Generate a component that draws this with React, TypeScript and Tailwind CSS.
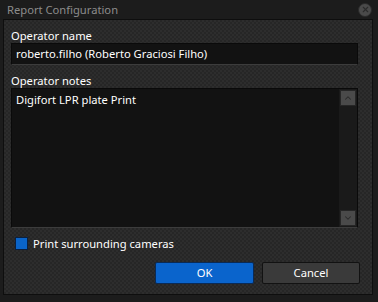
import { ChevronUp, ChevronDown, X } from "lucide-react";

const FONT = "font-['Segoe_UI','Noto_Sans',sans-serif]";

export default function App() {
  return (
    <div className={`w-[378px] h-[302px] bg-[#1c1c1c] flex flex-col ${FONT} text-[11.2px]`}>
      {/* Title bar */}
      <div className="h-[19px] flex items-center justify-between pl-[7px] pr-[6px]">
        <span className="text-[#8c8c8c] text-[11.2px] leading-none">Report Configuration</span>
        <div className="w-[14px] h-[14px] rounded-full bg-[#4a4a4a] border border-[#2a2a2a] flex items-center justify-center">
          <X size={9} strokeWidth={3} className="text-[#2c2c2c]" />
        </div>
      </div>

      {/* Body */}
      <div className="flex-1 flex pl-[3px] pr-[5px] pb-[7px]">
        <div className="flex-1 border border-[#0e0e0e] bg-[#2a2a2a] bg-[repeating-conic-gradient(#2d2d2d_0_25%,#262626_0_50%)] bg-[length:4px_4px] flex flex-col pl-[7px] pr-[14px] pt-[9px]">
          <label className="text-white leading-[14px]">Operator name</label>
          <div className="h-[22px] bg-[#121212] border border-[#0a0a0a] border-b-[#3c3c3c] flex items-center px-[4px] text-white">
            roberto.filho (Roberto Graciosi Filho)
          </div>

          <label className="text-white leading-[14px] mt-[9px]">Operator notes</label>
          <div className="h-[140px] bg-[#121212] border border-[#0a0a0a] border-b-[#3c3c3c] flex">
            <div className="flex-1 px-[4px] pt-[3px] text-white">Digifort LPR plate Print</div>
            <div className="w-[18px] bg-[#1a1a1a] flex flex-col justify-between items-center py-[1px] pr-[1px]">
              <div className="w-[16px] h-[16px] bg-[#4a4a4a] border border-[#262626] flex items-center justify-center">
                <ChevronUp size={10} strokeWidth={2.5} className="text-[#2a2a2a]" />
              </div>
              <div className="w-[16px] h-[16px] bg-[#4a4a4a] border border-[#262626] flex items-center justify-center">
                <ChevronDown size={10} strokeWidth={2.5} className="text-[#2a2a2a]" />
              </div>
            </div>
          </div>

          <div className="mt-[8px] flex items-center gap-[5px] pl-[4px] leading-[15px]">
            <div className="w-[13px] h-[13px] bg-[#0a64c8] border border-[#0a2040]" />
            <span className="text-white">Print surrounding cameras</span>
          </div>

          <div className="mt-[11px] -mr-[2px] flex justify-end gap-[8px]">
            <button className="w-[99px] h-[22px] bg-[#0a64cc] border border-[#0a2a55] rounded-[2px] text-white">
              OK
            </button>
            <button className="w-[98px] h-[22px] bg-[#3a3a3a] border border-[#121212] rounded-[2px] text-white">
              Cancel
            </button>
          </div>
        </div>
      </div>
    </div>
  );
}
